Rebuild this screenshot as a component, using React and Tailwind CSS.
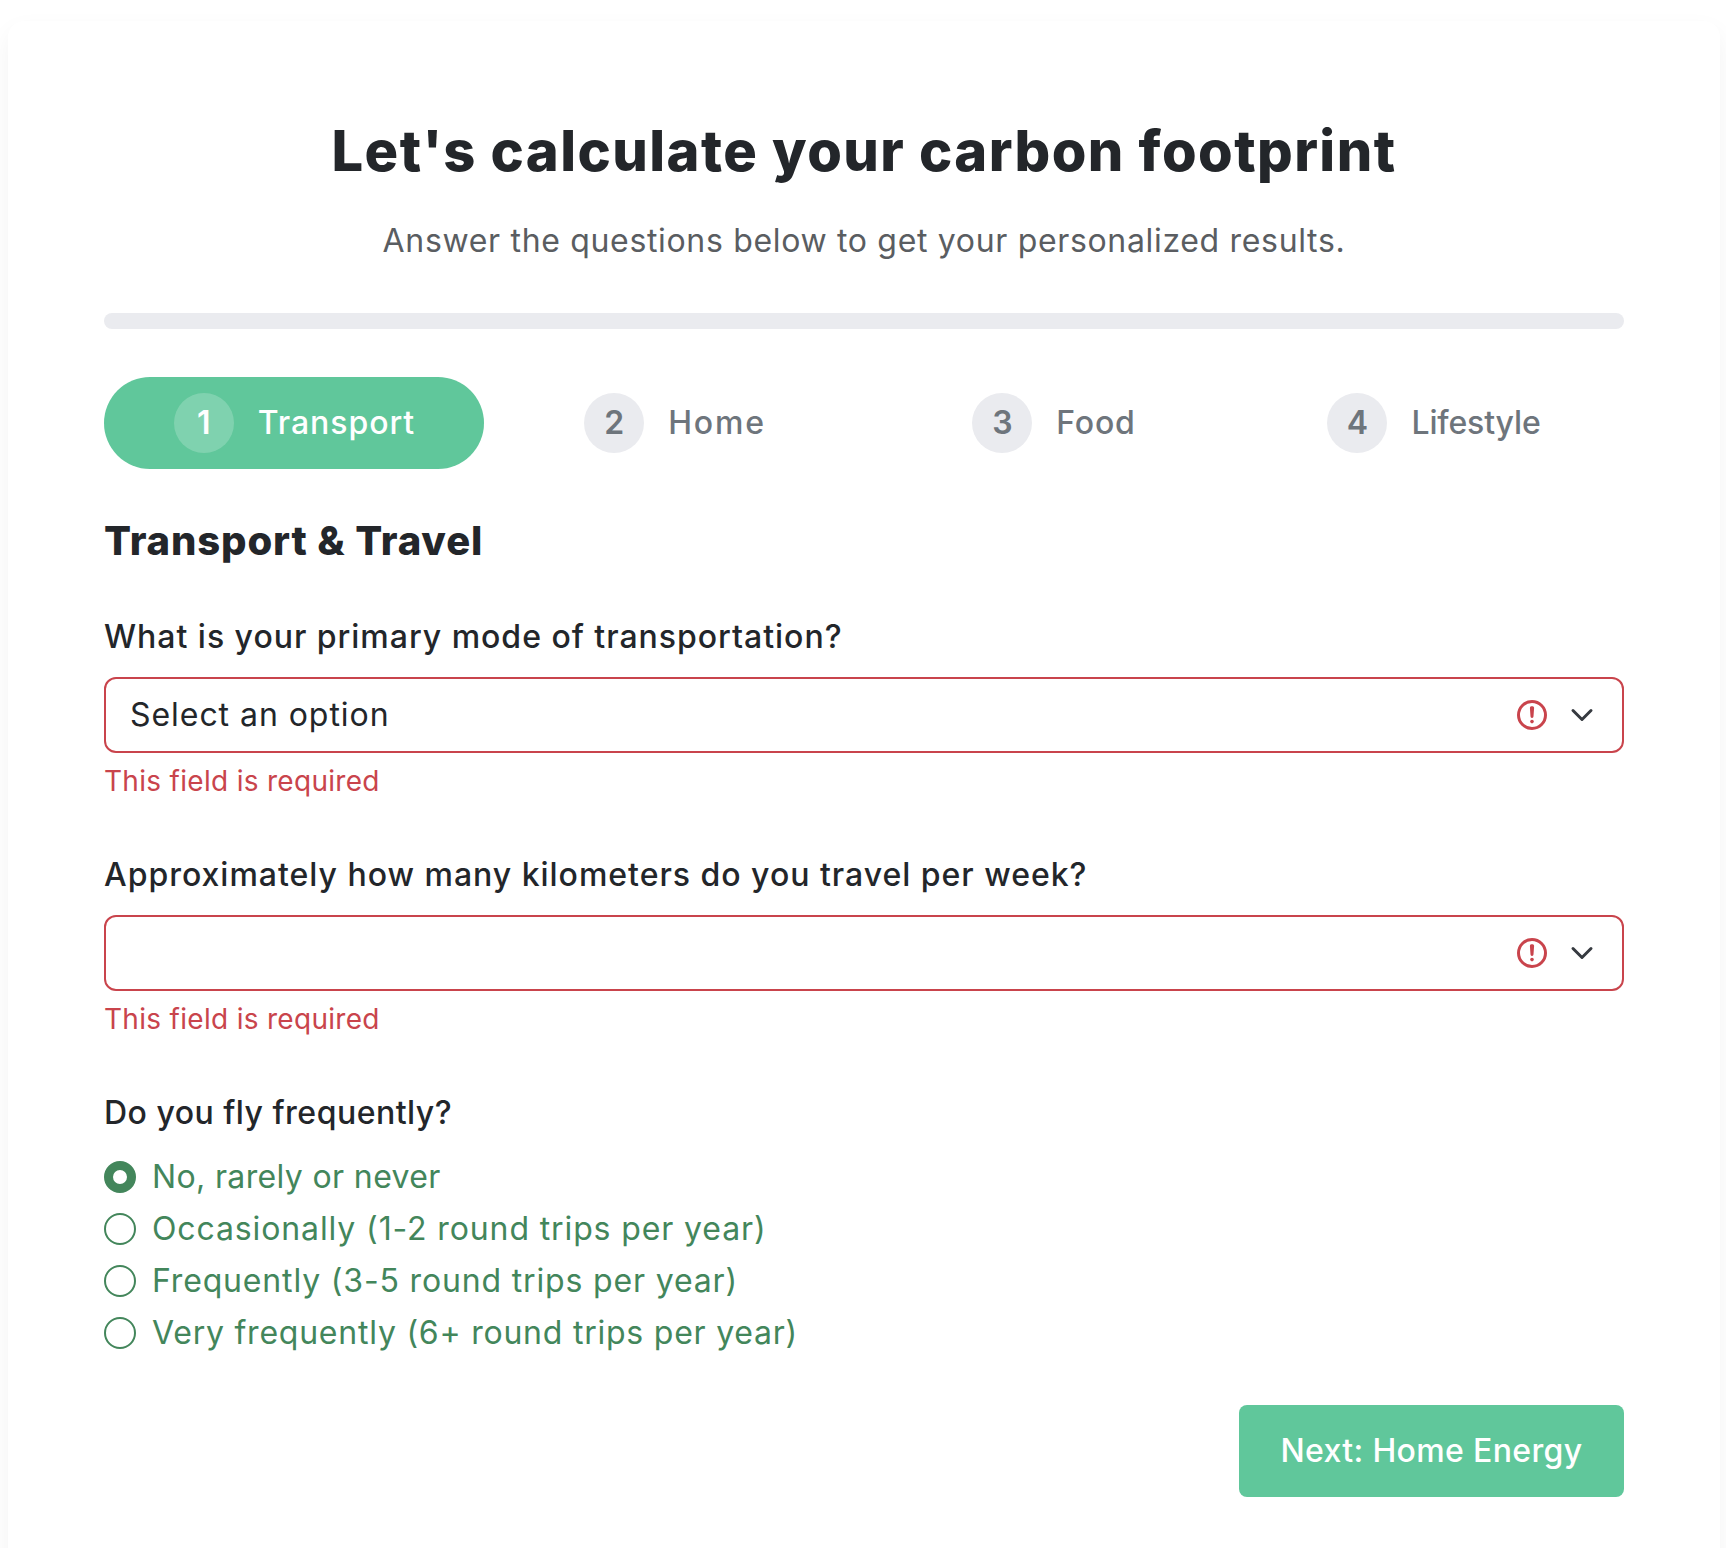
import React, { useState } from 'react';

const steps = [
  { name: 'Transport', tracking: '-mr-px tracking-[0.95px]' },
  { name: 'Home', tracking: '-mr-[2px] tracking-[1.8px]' },
  { name: 'Food', tracking: 'tracking-[0.8px]' },
  { name: 'Lifestyle', tracking: 'tracking-[-0.15px]' },
];

const flights = [
  { label: 'No, rarely or never', tracking: 'tracking-[0.36px]' },
  { label: 'Occasionally (1-2 round trips per year)', tracking: 'tracking-[0.88px]' },
  { label: 'Frequently (3-5 round trips per year)', tracking: 'tracking-[0.84px]' },
  { label: 'Very frequently (6+ round trips per year)', tracking: 'tracking-[0.77px]' },
];

function Step({ index, name, tracking, active }) {
  return (
    <li
      className={`flex h-[92px] items-center justify-center rounded-full ${
        active ? 'bg-[#60c79b] text-white' : 'text-[#6e757c]'
      }`}
    >
      <span
        className={`mr-6 flex size-[60px] items-center justify-center rounded-full font-semibold ${
          active ? 'bg-white/20' : 'bg-[#eaebef]'
        }`}
      >
        {index}
      </span>
      <span className={`font-medium ${tracking}`}>{name}</span>
    </li>
  );
}

function SelectField({ label, value }) {
  return (
    <div className="mb-[49px]">
      <div className="mb-4 font-medium tracking-[0.98px]">{label}</div>
      <div className="flex h-[76px] items-center rounded-[12px] border-2 border-[#c9444c] pl-6 pr-7">
        <span className="flex-1 tracking-[0.95px]">{value}</span>
        <svg className="mr-5 size-9" viewBox="0 0 12 12" fill="none" stroke="#c9444c">
          <circle cx="6" cy="6" r="4.5" />
          <path strokeLinejoin="round" d="M5.8 3.6h.4L6 6.5z" />
          <circle cx="6" cy="8.2" r=".6" fill="#c9444c" stroke="none" />
        </svg>
        <svg className="size-6" viewBox="0 0 16 16" fill="none" stroke="#363a40">
          <path strokeLinecap="round" strokeLinejoin="round" strokeWidth="2" d="m2 5 6 6 6-6" />
        </svg>
      </div>
      <div className="mt-[7px] text-[28px] leading-[42px] tracking-[0.3px] text-[#c9444c]">
        This field is required
      </div>
    </div>
  );
}

export default function App() {
  const [flight, setFlight] = useState(0);
  return (
    <div className="h-[1548px] overflow-hidden bg-white pl-2 pr-1.5 pt-[21px] font-['Inter',sans-serif] text-[32px] leading-[48px] text-[#23262a]">
      <main className="h-[1620px] rounded-[16px] bg-white px-24 pt-[97px] shadow-[0_10px_24px_rgba(0,0,0,0.05)]">
        <h1 className="mb-8 whitespace-nowrap text-center text-[56px] font-extrabold leading-[67px] tracking-[1.45px]">
          Let's calculate your carbon footprint
        </h1>
        <p className="mb-12 text-center tracking-[0.67px] text-[#5a5d61]">
          Answer the questions below to get your personalized results.
        </p>
        <div className="mb-12 h-4 rounded-full bg-[#eaebef]" />
        <ol className="mb-12 grid grid-cols-4">
          {steps.map((s, i) => (
            <Step key={s.name} index={i + 1} active={i === 0} {...s} />
          ))}
        </ol>
        <h2 className="mb-12 text-[40px] font-extrabold tracking-[0.87px]">Transport &amp; Travel</h2>
        <SelectField
          label="What is your primary mode of transportation?"
          value="Select an option"
        />
        <SelectField
          label="Approximately how many kilometers do you travel per week?"
          value=""
        />
        <div className="mb-4 font-medium tracking-[0.48px]">Do you fly frequently?</div>
        <div className="mb-12 flex flex-col gap-1 text-[#43865b]">
          {flights.map((f, i) => (
            <button key={f.label} onClick={() => setFlight(i)} className="flex items-center">
              <span
                className={`mr-4 size-8 rounded-full ${
                  flight === i ? 'border-[9px] border-[#43865b]' : 'border-2 border-[#43865b]'
                }`}
              />
              <span className={f.tracking}>{f.label}</span>
            </button>
          ))}
        </div>
        <div className="flex justify-end">
          <button className="h-[92px] w-[385px] rounded-lg bg-[#60c79b] font-medium tracking-[0.35px] text-white">
            Next: Home Energy
          </button>
        </div>
      </main>
    </div>
  );
}
